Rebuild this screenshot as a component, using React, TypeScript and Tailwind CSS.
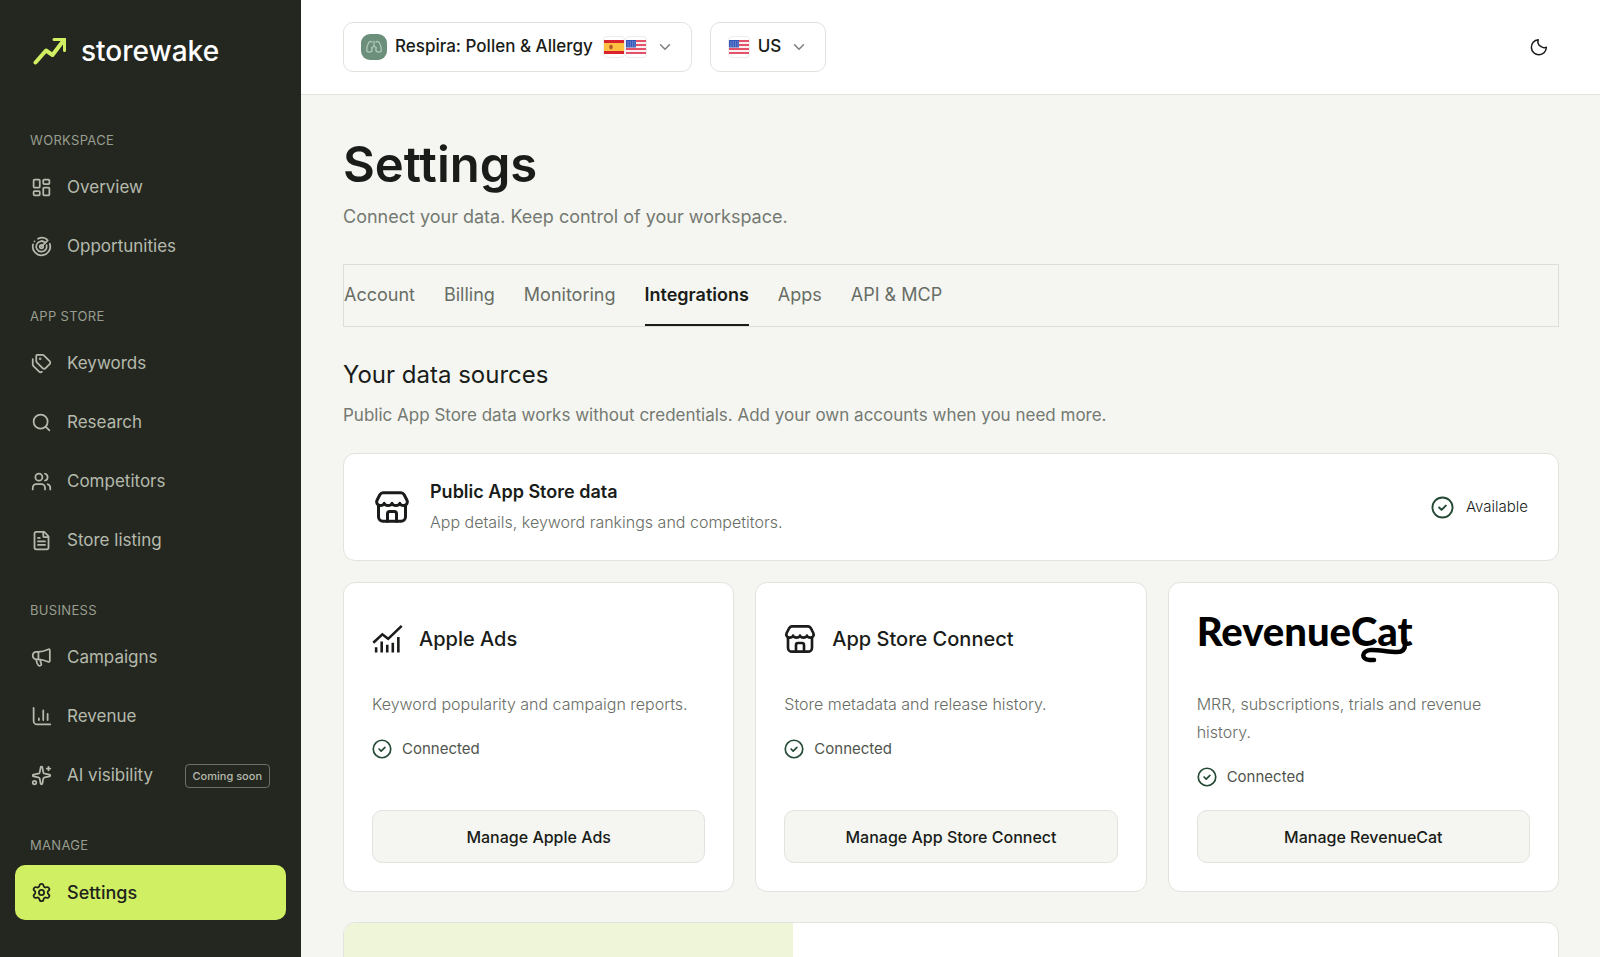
import type { ReactNode, SVGProps } from "react";
import {
  ChevronDown,
  FileText,
  LayoutDashboard,
  Search,
  Settings as Gear,
  Sparkles,
  Tags,
  Users,
} from "lucide-react";

type IconProps = SVGProps<SVGSVGElement>;

function Svg({ children, ...props }: IconProps) {
  return (
    <svg
      viewBox="0 0 24 24"
      fill="none"
      stroke="currentColor"
      strokeWidth="2"
      strokeLinecap="round"
      strokeLinejoin="round"
      aria-hidden="true"
      {...props}
    >
      {children}
    </svg>
  );
}

const TargetIcon = (p: IconProps) => (
  <Svg {...p}>
    <path d="M19.1 4.9 12 12" />
    <path d="M4 6h.01" />
    <path d="M8 3.1A10 10 0 0 1 18 3.6" />
    <path d="M2.3 9.6A10 10 0 1 0 21.5 9" />
    <path d="M16.2 7.7A6 6 0 1 0 17.8 10.5" />
    <path d="M12 6a6 6 0 0 1 2 .3" />
    <circle cx="12" cy="12" r="2" />
  </Svg>
);

const MegaphoneIcon = (p: IconProps) => (
  <Svg {...p}>
    <path d="M8 5.500H6a4 4 0 0 0-4 4.200 4 4 0 0 0 4 4.300h2c4.500 0 8 1.200 11.500 2.800 1.300.6 2 .2 2-1.200V4c0-1.400-.7-1.800-2-1.200C16 4.400 12.500 5.500 8 5.500Z" />
    <path d="M8.500 6v7.500" />
    <path d="M6 14.500c.2 2.700 1 5 2.500 6.600 1.400 1.400 3.800-.2 3.200-2-.5-1.400-1-2.300-1-4.600" />
  </Svg>
);

const RevenueIcon = (p: IconProps) => (
  <Svg {...p}>
    <path d="M3 2v15a4 4 0 0 0 4 4h15" />
    <path d="M9 16v-2M14 16V5M19 16V9" />
  </Svg>
);

const StoreIcon = (p: IconProps) => (
  <Svg {...p}>
    <path d="M3 11v7.500a3 3 0 0 0 3 3h12a3 3 0 0 0 3-3V11" />
    <path d="M6 2.500h12c1 0 1.500.4 2 1.200l2 3.800c.7 1.400-.2 3.500-2.200 3.500-1.600 0-2.600-.9-2.600-1.500 0 .6-1 1.500-2.600 1.500S12 10.100 12 9.500c0 .6-1 1.500-2.600 1.500s-2.600-.9-2.600-1.500c0 .6-1 1.500-2.600 1.500C2.200 11 1.300 8.900 2 7.500l2-3.800c.5-.8 1-1.200 2-1.200Z" />
    <path d="M9 21.500v-5a1.500 1.500 0 0 1 1.500-1.500h3a1.500 1.500 0 0 1 1.500 1.500v5" />
  </Svg>
);

const AdsIcon = (p: IconProps) => (
  <Svg {...p} strokeLinecap="butt" strokeLinejoin="miter">
    <path d="m1 14.500 7-6.500 4.500 3.500L23 1.500" />
    <path d="M3.200 22v-4M7.500 22v-8.500M11.800 22v-6M16.100 22v-7.500M20.400 22V10" />
  </Svg>
);

const CheckIcon = (p: IconProps) => (
  <Svg {...p}>
    <circle cx="12" cy="12" r="10.500" />
    <path d="m8.500 12 2.500 2.500 4.500-4.500" />
  </Svg>
);

const MoonIcon = (p: IconProps) => (
  <Svg {...p}>
    <path d="M11 2.300a10 10 0 1 0 10.800 9.900 6.300 6.300 0 0 1-7-.8 7 7 0 0 1-3.800-9.100Z" />
  </Svg>
);

function LogoMark() {
  return (
    <svg viewBox="0 0 34 28" className="h-7 w-[34px] text-[#d0ef63]" fill="none" stroke="currentColor" strokeWidth="4" strokeLinejoin="round" strokeLinecap="round" aria-hidden="true">
      <path d="m2.500 25.500 10.500-12 6.500 4.500L30.500 3.500" />
      <path d="M21 2.500h10.500v11" strokeLinejoin="miter" strokeWidth="3" />
    </svg>
  );
}

function Flag({ country }: { country: "es" | "us" }) {
  return (
    <span className="flex h-[22px] w-[22px] items-center justify-center rounded-sm border border-[#ececec] bg-white">
      {country === "es" ? (
        <svg viewBox="0 0 20 14" className="shrink-0" width="20" height="14" aria-hidden="true">
          <rect width="20" height="14" fill="#d8232f" />
          <rect y="3" width="20" height="8" fill="#fdc040" />
          <path d="M5 5.500h4v3H5z" fill="#c8742c" />
          <path d="M6.300 4.700h1.400v4.600H6.300z" fill="#a8452a" />
        </svg>
      ) : (
        <svg viewBox="0 0 20 14" className="shrink-0" width="20" height="14" aria-hidden="true">
          <rect width="20" height="14" fill="#fdeff0" />
          <path d="M0 1h20M0 5h20M0 9h20M0 13h20" stroke="#e2536a" strokeWidth="2" />
          <rect width="10" height="7.500" fill="#3558b8" />
          <path d="M1.500 2h8M1.500 4h8M1.500 6h8" stroke="#b9c8f0" strokeWidth=".8" strokeDasharray="1 1.300" />
        </svg>
      )}
    </span>
  );
}

function AppBadge() {
  return (
    <svg viewBox="0 0 26 26" className="h-[26px] w-[26px]" aria-hidden="true">
      <rect width="26" height="26" rx="9" fill="#6b8f7b" />
      <g fill="none" stroke="#b4ccba" strokeWidth="1.200" strokeLinecap="round" strokeLinejoin="round">
        <path d="M13 7v5l-2.500 2M13 12l2.500 2" />
        <path d="M11 8c-1.200-1-2.500-.5-3.500 1-1.400 2.300-2 5-1.700 8.300 1.700 1.200 3.700.9 5-.3M15 8c1.200-1 2.500-.5 3.500 1 1.400 2.300 2 5 1.700 8.300-1.700 1.200-3.700.9-5-.3" />
        <path d="M10.800 17c.6-1 .4-2 .2-3M15.200 17c-.6-1-.4-2-.2-3" />
      </g>
    </svg>
  );
}

type NavItem = { label: string; icon: ReactNode; badge?: string; active?: boolean };

const iconClass = "h-[21px] w-[21px] shrink-0";

const nav: { title: string; items: NavItem[] }[] = [
  {
    title: "WORKSPACE",
    items: [
      { label: "Overview", icon: <LayoutDashboard className={iconClass} /> },
      { label: "Opportunities", icon: <TargetIcon className={iconClass} /> },
    ],
  },
  {
    title: "APP STORE",
    items: [
      { label: "Keywords", icon: <Tags className={iconClass} /> },
      { label: "Research", icon: <Search className={iconClass} /> },
      { label: "Competitors", icon: <Users className={iconClass} /> },
      { label: "Store listing", icon: <FileText className={iconClass} /> },
    ],
  },
  {
    title: "BUSINESS",
    items: [
      { label: "Campaigns", icon: <MegaphoneIcon className={iconClass} /> },
      { label: "Revenue", icon: <RevenueIcon className={iconClass} /> },
      { label: "AI visibility", icon: <Sparkles className={iconClass} />, badge: "Coming soon" },
    ],
  },
  {
    title: "MANAGE",
    items: [{ label: "Settings", icon: <Gear className={iconClass} />, active: true }],
  },
];

function Sidebar() {
  return (
    <aside className="w-[301px] shrink-0 bg-[#242720] px-[15px] pb-9 text-[#b5baad]">
      <a href="#home" className="flex h-[101px] items-center gap-[14px] pl-[18px] text-[28px] font-medium text-white">
        <LogoMark />
        storewake
      </a>
      <nav aria-label="Main" className="flex flex-col gap-[35px] pt-8">
        {nav.map((group) => (
          <section key={group.title}>
            <h2 className="mb-3 pl-[15px] text-[13px] leading-[15px] tracking-wide text-[#979d8f]">{group.title}</h2>
            <ul className="flex flex-col gap-1">
              {group.items.map((item) => (
                <li key={item.label}>
                  <a
                    href={"#" + item.label.toLowerCase().replace(" ", "-")}
                    aria-current={item.active ? "page" : undefined}
                    className={
                      item.active
                        ? "flex h-[55px] items-center gap-[15px] rounded-[10px] bg-[#d0ef63] px-4 text-lg font-medium text-[#20231c]"
                        : "flex h-[55px] items-center gap-[15px] rounded-[10px] px-4 text-[17px]"
                    }
                  >
                    {item.icon}
                    {item.label}
                    {item.badge && (
                      <span className="ml-auto rounded border border-[#6c7165] px-[7px] py-[3px] text-[11px] leading-4 font-medium">{item.badge}</span>
                    )}
                  </a>
                </li>
              ))}
            </ul>
          </section>
        ))}
      </nav>
    </aside>
  );
}

const selectorClass = "flex h-[50px] items-center rounded-[10px] border border-[#e1e3dd] bg-white px-[17px] text-[17px] font-medium text-[#191c18]";

function Header() {
  return (
    <header className="flex h-[95px] items-center gap-[18px] border-b border-[#e1e3dd] bg-white pr-[41px] pl-[42px]">
      <button type="button" aria-haspopup="listbox" className={selectorClass}>
        <AppBadge />
        <span className="ml-2">Respira: Pollen &amp; Allergy</span>
        <span className="ml-[10px] flex">
          <Flag country="es" />
          <Flag country="us" />
        </span>
        <ChevronDown className="ml-[9px] h-[18px] w-[18px] text-[#7d8179]" strokeWidth={2} />
      </button>
      <button type="button" aria-haspopup="listbox" className={selectorClass}>
        <Flag country="us" />
        <span className="ml-2">US</span>
        <ChevronDown className="ml-[9px] h-[18px] w-[18px] text-[#7d8179]" strokeWidth={2} />
      </button>
      <button type="button" aria-label="Switch to dark theme" className="ml-auto flex h-10 w-10 items-center justify-center">
        <MoonIcon className="h-[18px] w-[18px] text-[#191c18]" />
      </button>
    </header>
  );
}

const tabs = ["Account", "Billing", "Monitoring", "Integrations", "Apps", "API & MCP"];

function Tabs() {
  return (
    <div role="tablist" aria-label="Settings sections" className="mt-[33px] flex h-[63px] gap-[29px] border border-[#dcdfd8]">
      {tabs.map((tab) => (
        <button
          key={tab}
          type="button"
          role="tab"
          aria-selected={tab === "Integrations"}
          className={
            tab === "Integrations"
              ? "border-b-2 border-[#191c18] text-lg font-semibold text-[#191c18]"
              : "border-b-2 border-transparent text-lg text-[#686d65]"
          }
        >
          {tab}
        </button>
      ))}
    </div>
  );
}

function RevenueCatLogo() {
  return (
    <div className="relative self-start text-[40px] leading-10 font-black text-black" style={{ fontFamily: "Lato, sans-serif" }}>
      RevenueCat
      <svg viewBox="0 0 56 24" className="absolute top-7 right-0 h-6 w-14" fill="none" stroke="currentColor" strokeWidth="4.500" strokeLinecap="round" aria-hidden="true">
        <path d="M48 0v5.500c0 5-2.500 7.500-8 7.500-9 0-17-2.200-26-2-10 .5-10 9.800-1.500 10h4.500" />
      </svg>
    </div>
  );
}

const sources = [
  { name: "Apple Ads", heading: <><AdsIcon className="h-[31px] w-[31px]" /><h3>Apple Ads</h3></>, text: "Keyword popularity and campaign reports." },
  { name: "App Store Connect", heading: <><StoreIcon className="h-8 w-8" /><h3>App Store Connect</h3></>, text: "Store metadata and release history." },
  { name: "RevenueCat", heading: <RevenueCatLogo />, text: "MRR, subscriptions, trials and revenue history." },
];

export default function App() {
  return (
    <div className="flex h-screen overflow-hidden bg-[#f5f6f1] text-[#191c18]" style={{ fontFamily: "Inter, 'Noto Sans', sans-serif" }}>
      <Sidebar />
      <div className="min-w-0 grow">
        <Header />
        <main className="pt-10 pr-[41px] pl-[42px]">
          <h1 className="text-[49px] leading-[60px] font-semibold">Settings</h1>
          <p className="mt-2 text-lg leading-7 text-[#747971]">Connect your data. Keep control of your workspace.</p>
          <Tabs />
          <h2 className="mt-8 text-2xl leading-8">Your data sources</h2>
          <p className="mt-2.5 text-[17px] leading-7 text-[#747971]">
            Public App Store data works without credentials. Add your own accounts when you need more.
          </p>
          <section className="mt-6 flex h-[108px] items-center rounded-xl border border-[#e1e3dd] bg-white px-[30px]">
            <StoreIcon className="h-9 w-9" />
            <div className="ml-5 pt-0.5">
              <h3 className="text-lg leading-7 font-semibold">Public App Store data</h3>
              <p className="text-base leading-8 font-light text-[#686d65]">App details, keyword rankings and competitors.</p>
            </div>
            <div className="ml-auto flex items-center gap-3 text-[15px] font-light">
              <CheckIcon className="h-[23px] w-[23px] text-[#244a35]" />
              Available
            </div>
          </section>
          <div className="mt-[21px] grid grid-cols-3 gap-[21px]">
            {sources.map((s) => (
              <article key={s.name} className="flex h-[310px] flex-col rounded-xl border border-[#e1e3dd] bg-white p-7">
                <div className="flex h-14 items-center gap-4 text-xl font-medium">{s.heading}</div>
                <p className="mt-[23px] text-base leading-7 font-light text-[#686d65]">{s.text}</p>
                <div className="mt-[17px] flex items-center gap-2.5 text-[15px] leading-7 text-[#4f544c]">
                  <CheckIcon className="h-5 w-5 text-[#244a35]" />
                  Connected
                </div>
                <button type="button" className="mt-auto h-[53px] rounded-[10px] border border-[#e1e3dd] bg-[#f5f6f1] text-base font-medium">
                  Manage {s.name}
                </button>
              </article>
            ))}
          </div>
          <section className="mt-[30px] flex h-40 overflow-hidden rounded-xl border border-[#e1e3dd] bg-white">
            <div className="w-[37%] bg-[#eef5d9]" />
          </section>
        </main>
      </div>
    </div>
  );
}
